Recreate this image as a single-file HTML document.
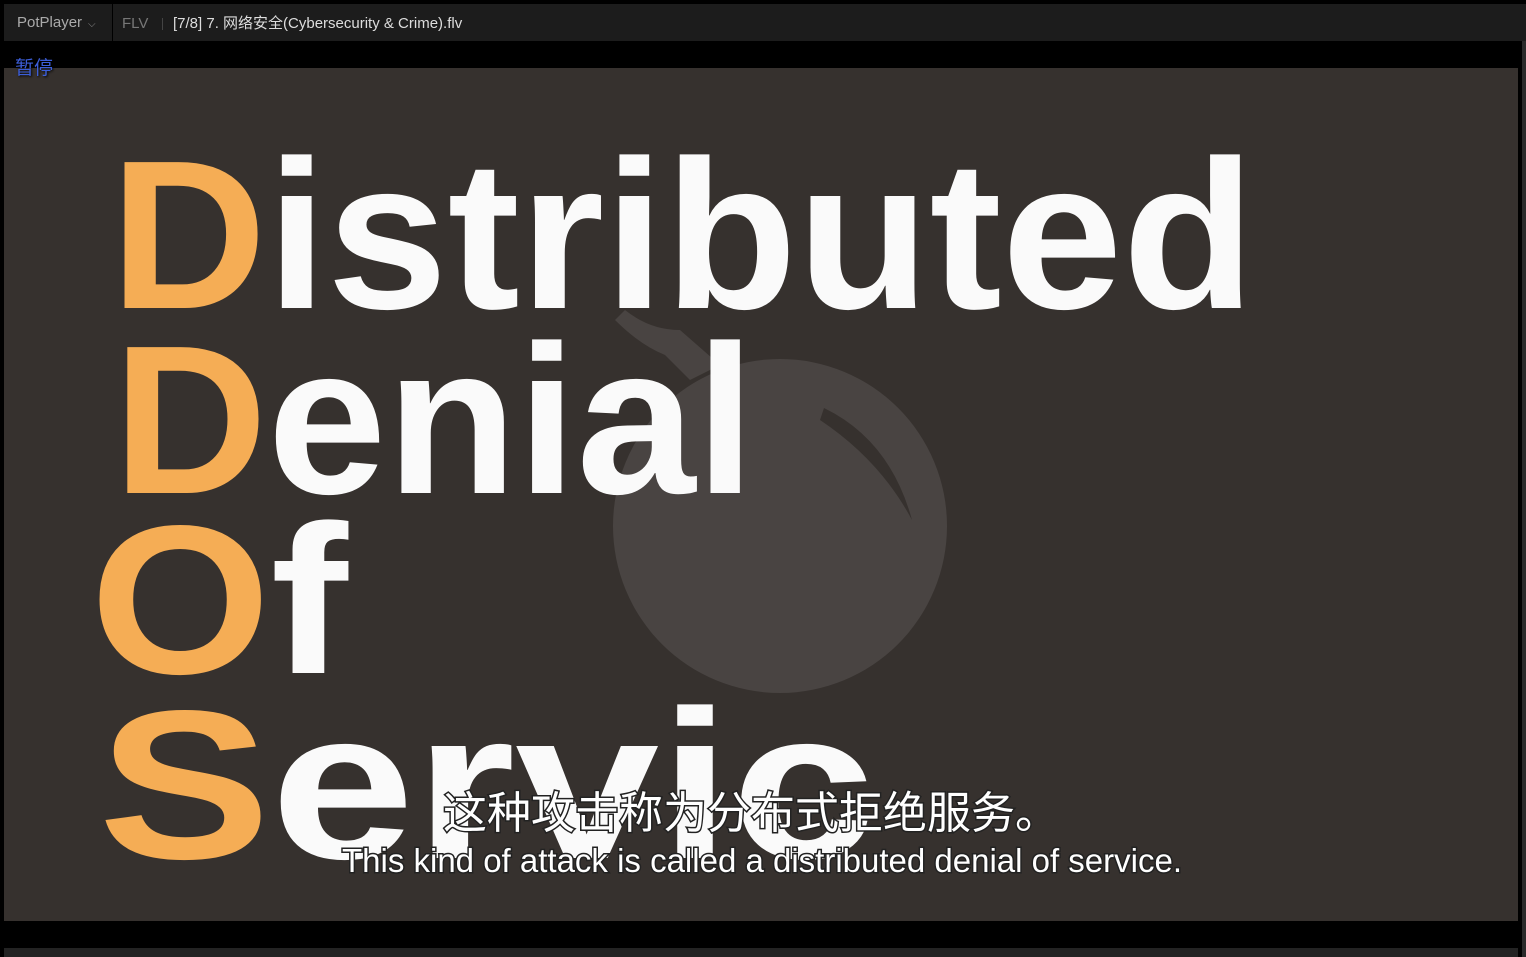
<!DOCTYPE html>
<html><head><meta charset="utf-8"><style>
html,body{margin:0;padding:0;background:#000;width:1526px;height:957px;overflow:hidden;font-family:"Liberation Sans","Noto Sans CJK SC",sans-serif}
.bar{position:absolute;left:4px;top:4px;width:1522px;height:37px;background:#1c1c1c}
.pp{position:absolute;left:0;top:0;width:109px;height:37px;border-right:1px solid #000;color:#aaa;font-size:15px;line-height:37px;padding-left:13px;box-sizing:border-box}
.pp span{font-size:10px;color:#888;margin-left:6px}
.flv{position:absolute;left:118px;top:0;line-height:40px;color:#777;font-size:15px}
.sep{position:absolute;left:158px;top:14px;width:1px;height:12px;background:#444}
.title{position:absolute;left:169px;top:0;line-height:40px;color:#ddd;font-size:15px}
.pause{position:absolute;left:15px;top:53px;color:#3c5ed8;font-size:19px;text-shadow:1px 1px 2px #000;z-index:3}
.video{position:absolute;left:4px;top:68px;width:1514px;height:853px;background:#36312e;overflow:hidden}
.bottom{position:absolute;left:4px;top:948px;width:1514px;height:9px;background:#232323}
.rs{position:absolute;left:1522px;top:41px;width:4px;height:916px;background:#2a2a2a}
</style></head><body>
<div class="bar"><div class="pp">PotPlayer<span>⌵</span></div><div class="flv">FLV</div><div class="sep"></div><div class="title">[7/8] 7. 网络安全(Cybersecurity &amp; Crime).flv</div></div>
<div class="pause">暂停</div>
<div class="video">
<svg width="1514" height="853" viewBox="4 68 1514 853" xmlns="http://www.w3.org/2000/svg">
<circle cx="780" cy="526" r="167" fill="#494442"/>
<path d="M615 320 Q640 345 665 355 L690 380 L720 365 L680 330 Q650 330 625 310 Z" fill="#494442"/>
<path d="M824 408 Q890 440 912 520 Q880 460 820 420 Z" fill="#36312e"/>
<g font-family="Liberation Sans, sans-serif" font-weight="bold" font-size="212" fill="#fafafa">
<text x="110" y="308" textLength="1145" lengthAdjust="spacingAndGlyphs"><tspan fill="#f5ad55">D</tspan>istributed</text>
<text x="113" y="493" textLength="642" lengthAdjust="spacingAndGlyphs"><tspan fill="#f5ad55">D</tspan>enial</text>
<text x="90" y="673" textLength="258" lengthAdjust="spacingAndGlyphs"><tspan fill="#f5ad55">O</tspan>f</text>
<text x="98" y="858" textLength="777" lengthAdjust="spacingAndGlyphs"><tspan fill="#f5ad55">S</tspan>ervic</text>
</g>
<g text-anchor="middle" fill="#fff" stroke="#222" stroke-width="3" paint-order="stroke">
<text x="751" y="828" font-family="Liberation Sans, Noto Sans CJK SC, sans-serif" font-size="44">这种攻击称为分布式拒绝服务。</text>
<text x="762" y="872" font-family="Liberation Sans, sans-serif" font-size="33" textLength="840" lengthAdjust="spacingAndGlyphs">This kind of attack is called a distributed denial of service.</text>
</g>
</svg>
</div>
<div class="bottom"></div>
<div class="rs"></div>
</body></html>
